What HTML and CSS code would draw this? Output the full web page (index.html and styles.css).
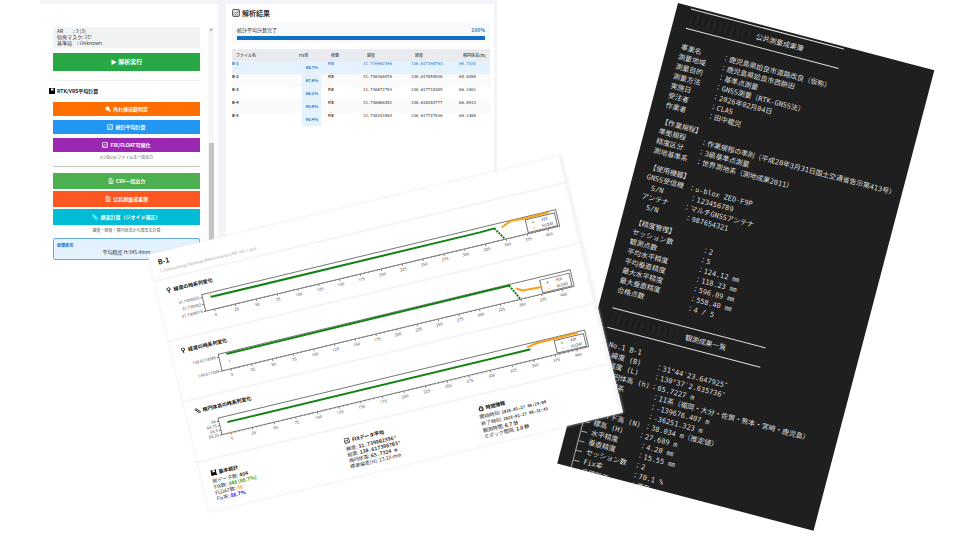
FILE: index.html
```
<!DOCTYPE html>
<html lang="ja">
<head>
<meta charset="utf-8">
<title>RTK/VRS 解析結果</title>
<link rel="stylesheet" href="styles.css">
</head>
<body>
<svg class="defs" aria-hidden="true">
  <symbol id="i-disk" viewBox="0 0 12 12"><path d="M0 0h12v12H0z" fill="currentColor"/><path d="M4 1h5v4H4z" fill="#fff"/></symbol>
  <symbol id="i-chart" viewBox="0 0 12 12"><rect x="1" y="1" width="10" height="10" rx="1" fill="none" stroke="currentColor" stroke-width="1.4"/><path d="M2.5 7l2.500-2 2 1.500 3-4M3 9.500V8M5.500 9.500V8M8 9.500V7.500" fill="none" stroke="currentColor" stroke-width="1.200"/></symbol>
  <symbol id="i-search" viewBox="0 0 12 12"><circle cx="5" cy="5" r="4" fill="currentColor"/><path d="M7 7l4 4" stroke="currentColor" stroke-width="3"/></symbol>
  <symbol id="i-file" viewBox="0 0 12 12"><path d="M2 1h6l2 2v8H2zM4 3.500h3M4 8.500h4M4 6h4" fill="none" stroke="currentColor" stroke-width="1.500"/></symbol>
  <symbol id="i-ruler" viewBox="0 0 12 12"><path d="M3 0.800L0.800 3 9 11.200 11.200 9zM3.500 5L5 3.500M6 7.500L7.500 6" fill="none" stroke="currentColor" stroke-width="1.500"/></symbol>
  <symbol id="i-pin" viewBox="0 0 12 12"><circle cx="6" cy="4" r="3" fill="none" stroke="currentColor" stroke-width="1.800"/><path d="M6 7v5" stroke="currentColor" stroke-width="1.800"/></symbol>
  <symbol id="i-clock" viewBox="0 0 12 12"><path d="M4 0h4v2H4z" fill="currentColor"/><circle cx="6" cy="7" r="3.800" fill="none" stroke="currentColor" stroke-width="2"/><path d="M6 5v2h1.500" fill="none" stroke="currentColor"/></symbol>
</svg>
<main class="board">
  <section class="app">
    <aside class="side">
      <div class="side-body">
        <pre class="info">AR　　: 3 (3)
仰角マスク: 15°
基準局　: Unknown</pre>
        <button class="btn run">▶ 解析実行</button>
        <hr class="soft">
        <h2><svg><use href="#i-disk"/></svg>RTK/VRS平均計算</h2>
        <div class="group">
          <button class="btn orange"><svg><use href="#i-search"/></svg>外れ値自動判定</button>
          <button class="btn blue"><svg><use href="#i-chart"/></svg>統計平均計算</button>
          <button class="btn purple"><svg><use href="#i-chart"/></svg>FIX/FLOAT可視化</button>
        </div>
        <p class="note">3つのCSVファイルを一括出力</p>
        <hr>
        <div class="group tight">
          <button class="btn green"><svg><use href="#i-file"/></svg>CSV一括出力</button>
          <button class="btn red"><svg><use href="#i-file"/></svg>公共測量成果簿</button>
          <button class="btn teal"><svg><use href="#i-ruler"/></svg>標高計算（ジオイド補正）</button>
        </div>
        <p class="note">緯度・経度・楕円体高から標高を計算</p>
        <div class="summary"><b>処理状況</b><span>平均精度 H:345.4mm</span></div>
      </div>
      <div class="scroll"><i>▲</i><div class="thumb"></div></div>
    </aside>
    <section class="results">
      <h1><svg><use href="#i-chart"/></svg>解析結果</h1>
      <div class="progress">
        <div><span>統計平均計算完了</span><b>100%</b></div>
        <div class="bar"></div>
      </div>
      <table class="list">
        <thead><tr><th>ファイル名</th><th>Fix率</th><th>状態</th><th>緯度</th><th>経度</th><th>楕円体高(m)</th></tr></thead>
        <tbody>
          <tr class="on"><td>B-1</td><td><span>88.7%</span></td><td>Fix</td><td>31.739902396</td><td>130.617398703</td><td>65.7324</td></tr>
          <tr><td>B-2</td><td><span>67.6%</span></td><td>Fix</td><td>31.740166970</td><td>130.617059540</td><td>65.8450</td></tr>
          <tr><td>B-3</td><td><span>66.1%</span></td><td>Fix</td><td>31.740672793</td><td>130.617718385</td><td>66.3461</td></tr>
          <tr><td>B-4</td><td><span>90.9%</span></td><td>Fix</td><td>31.740066452</td><td>130.618282777</td><td>66.0913</td></tr>
          <tr><td>B-5</td><td><span>90.4%</span></td><td>Fix</td><td>31.740242084</td><td>130.617747036</td><td>66.1408</td></tr>
        </tbody>
      </table>
    </section>
  </section>

  <section class="term">
    <header class="band"><i></i><h2>公共測量成果簿</h2></header>
    <dl>
      <dt>事業名</dt><dd>：鹿児島県姶良市道路改良（仮称）</dd>
      <dt>測量地域</dt><dd>：鹿児島県姶良市西餅田</dd>
      <dt>測量目的</dt><dd>：基準点測量</dd>
      <dt>測量方法</dt><dd>：GNSS測量（RTK-GNSS法）</dd>
      <dt>実施日</dt><dd>：2026年02月04日</dd>
      <dt>受注者</dt><dd>：CLAS</dd>
      <dt>作業者</dt><dd>：田中龍児</dd>
    </dl>
    <h3>【作業規程】</h3>
    <dl>
      <dt>準拠規程</dt><dd>：作業規程の準則（平成20年3月31日国土交通省告示第413号）</dd>
      <dt>精度区分</dt><dd>：3級基準点測量</dd>
      <dt>測地基準系</dt><dd>：世界測地系（測地成果2011）</dd>
    </dl>
    <h3>【使用機器】</h3>
    <dl>
      <dt>GNSS受信機</dt><dd>：u-blox ZED-F9P</dd>
      <dt class="sub">S/N</dt><dd class="in">：123456789</dd>
      <dt>アンテナ</dt><dd>：マルチGNSSアンテナ</dd>
      <dt class="sub">S/N</dt><dd class="in">：987654321</dd>
    </dl>
    <h3>【精度管理】</h3>
    <dl class="wide">
      <dt>セッション数</dt><dd>：2</dd>
      <dt>観測点数</dt><dd>：5</dd>
      <dt>平均水平精度</dt><dd>：124.12 ㎜</dd>
      <dt>平均垂直精度</dt><dd>：118.23 ㎜</dd>
      <dt>最大水平精度</dt><dd>：596.09 ㎜</dd>
      <dt>最大垂直精度</dt><dd>：558.40 ㎜</dd>
      <dt>合格点数</dt><dd>：4 / 5</dd>
    </dl>
    <header class="band second"><i></i><h2>観測成果一覧</h2></header>
    <h4>No.1 B-1</h4>
    <dl class="tree">
      <dt>緯度 (B)</dt><dd>：31°44′23.647925″</dd>
      <dt>経度 (L)</dt><dd>：130°37′2.635736″</dd>
      <dt>楕円体高 (h)</dt><dd>：65.7227 m</dd>
      <dt>座標系</dt><dd class="in">：II系（福岡・大分・佐賀・熊本・宮崎・鹿児島）</dd>
      <dt>X座標</dt><dd class="in">：-139676.407 m</dd>
      <dt>Y座標</dt><dd class="in">：-36251.323 m</dd>
      <dt>ジオイド高 (N)</dt><dd class="in">：38.034 m（推定値）</dd>
      <dt>標高 (H)</dt><dd>：27.689 m</dd>
      <dt>水平精度</dt><dd class="in">：4.20 ㎜</dd>
      <dt>垂直精度</dt><dd class="in">：15.55 ㎜</dd>
      <dt>セッション数</dt><dd class="in">：2</dd>
      <dt>Fix率</dt><dd class="in">：70.1 %</dd>
      <dt>品質評価</dt><dd class="in">：優良</dd>
    </dl>
  </section>

  <section class="report">
    <header><h2>B-1</h2><p>C:/Users/kangi/Desktop/RINEX/Kousen/RB-168-1.pos</p></header>
    <section class="plot"><h3><svg><use href="#i-pin"/></svg>緯度の時系列変化</h3><svg class="chart" viewBox="0 0 422 27" data-left="43" data-zero="52" data-y="31.7399025,31.739902,31.7399015"></svg></section>
    <section class="plot"><h3><svg><use href="#i-pin"/></svg>経度の時系列変化</h3><svg class="chart" viewBox="0 0 422 27" data-left="45" data-zero="54" data-y="130.6173985,130.617398"></svg></section>
    <section class="plot"><h3><svg><use href="#i-ruler"/></svg>楕円体高の時系列変化</h3><svg class="chart" viewBox="0 0 422 27" data-left="30" data-zero="39" data-y="66,65.75,65.5,65.25"></svg></section>
    <div class="stats">
      <div><h3><svg><use href="#i-disk"/></svg>基本統計</h3><p>総データ数: <b>404</b></p><p>FIX数: <b class="fix">348 (88.7%)</b></p><p>FLOAT数: <b class="float">56</b></p><p>Fix率: <b class="rate">88.7%</b></p></div>
      <div><h3><svg><use href="#i-chart"/></svg>FIXデータ平均</h3><p>緯度: <code>31.739902396°</code></p><p>経度: <code>130.617398703°</code></p><p>楕円体高: <code>65.7324 m</code></p><p>標準偏差(H): 13.18 mm</p></div>
      <div><h3><svg><use href="#i-clock"/></svg>時間情報</h3><p>開始時刻: <code class="small">2026-01-27 06:25:00</code></p><p>終了時刻: <code class="small">2026-01-27 06:31:43</code></p><p>観測時間: <b>6.7 分</b></p><p>エポック間隔: <b>1.0 秒</b></p></div>
    </div>
  </section>
</main>
<script src="charts.js"></script>
</body>
</html>
```
FILE: styles.css
```
* { box-sizing: border-box; }
body { margin: 0; background: #fff; color: #333; font-family: "Noto Sans CJK JP", sans-serif; overflow: hidden; }
h1, h2, h3, h4, p, dl, dd, pre { margin: 0; }
.defs { position: absolute; width: 0; height: 0; }
.board { position: relative; min-height: 100vh; overflow: hidden; }

.app { position: absolute; left: 40px; top: 0; width: 457px; padding-top: 4px; background: #f3f4f7; display: grid; grid-template-columns: 178px 1fr; gap: 8px; padding-right: 3px; font-size: 5px; line-height: 6px; }
.side { background: #fff; display: flex; padding: 23px 4px 0 13px; gap: 8px; }
.side-body { flex: 1; display: flex; flex-direction: column; padding-bottom: 1px; }
.info { background: #f1f2f4; padding: 1px 4px 2px; font: inherit; }
.btn { display: flex; align-items: center; justify-content: center; gap: 2px; border: 0; padding: 0; height: 14px; color: #fff; font: bold 5px/6px "Noto Sans CJK JP", sans-serif; width: 100%; }
.btn svg { width: 6px; height: 6px; }
.run { height: 18px; margin-top: 5px; background: #28a745; font-size: 6px; }
hr { border: 0; height: 1px; width: 100%; background: #c4c4c4; margin: 6px 0 6px; }
.soft { background: #f0f0f0; margin: 9px 0 7px; }
.side h2 { display: flex; gap: 2px; align-items: center; font-size: 5px; line-height: 6px; margin: 0 0 8px -4px; color: #222; }
.side h2 svg { width: 6px; height: 6px; color: #000; }
.group { display: grid; gap: 4px; }
.tight { gap: 2px; }
.tight .btn { height: 16px; }
.orange { background: #ff6f00; }
.blue { background: #2196f3; }
.purple { background: #9c27b0; }
.green { background: #4caf50; }
.red { background: #ff5722; }
.teal { background: #00bcd4; }
.note { text-align: center; font-size: 4px; line-height: 6px; margin-top: 2px; color: #555; }
.summary { margin-top: 5px; height: 22px; border: 1px solid #64a9e4; border-radius: 2px; background: #e3f2fd; padding: 3px; display: grid; text-align: center; }
.summary b { color: #1565c0; text-align: left; font-size: 4px; }
.scroll { width: 6px; background: #f5f5f5; display: flex; flex-direction: column; align-items: center; }
.scroll i { font-size: 3px; font-style: normal; color: #999; }
.thumb { width: 5px; height: 98px; margin-top: 110px; background: #c4c4c6; }

.results { background: #fff; padding: 4px 4px 0 6px; margin-top: 0; }
.results h1 { display: flex; align-items: center; gap: 2px; font-size: 7px; line-height: 10px; }
.results h1 svg { width: 8px; height: 8px; }
.progress { margin-top: 5px; background: #f8f9fa; padding: 4px 5px; height: 20px; }
.progress > div:first-child { display: flex; justify-content: space-between; margin-bottom: 3px; }
.progress b { color: #2a7fc4; }
.bar { height: 4px; background: #1170c0; }
.list { margin-top: 6px; border-collapse: collapse; width: 100%; table-layout: fixed; font-size: 5px; line-height: 6px; }
.list th { background: #e9ebef; height: 12px; font-weight: 500; text-align: left; padding: 0; font-size: 4px; color: #444; white-space: nowrap; }
.list th:nth-child(1) { width: 67px; padding-left: 4px; }
.list th:nth-child(2) { width: 28px; }
.list th:nth-child(3) { width: 36px; padding-left: 4px; }
.list th:nth-child(4) { width: 48px; padding-left: 4px; }
.list th:nth-child(5) { width: 48px; padding-left: 4px; }
.list th:nth-child(6) { padding-left: 4px; }
.list td { height: 13px; padding: 0; vertical-align: top; color: #333; line-height: 5px; }
.list td:nth-child(n+4) { font: 4px/5px "DejaVu Sans Mono", monospace; }
.list td:nth-child(2) { padding-left: 3px; }
.list td span { display: block; width: 19px; height: 13px; padding: 4px 3px 0 0; text-align: right; font-size: 4px; font-weight: 700; background: #e3f2fd; color: #1976d2; }
.list td:nth-child(3) { padding-left: 1px; font-size: 4px; font-weight: 700; }
.list td:first-child { font-size: 4px; font-weight: 700; }
.list tr:nth-child(even) td { background: #fafafa; }
.list .on td { background: #e3f2fd; color: #1976d2; }

.term { position: absolute; left: 678px; top: 3px; width: 265px; height: 476px; transform: rotate(14.7deg); transform-origin: 0 0; background: #1f1f1f; color: #ddd; padding: 2px 0 0 14px; font-family: "DejaVu Sans Mono", "Noto Sans CJK JP", monospace; font-size: 7px; line-height: 10px; overflow: hidden; white-space: nowrap; }
.term h2, .term h3, .term h4 { font-size: 7px; line-height: 10px; font-weight: 400; }
.band { width: 158px; height: 21px; border-top: 1px solid #ddd; border-bottom: 1px solid #ddd; display: flex; align-items: center; gap: 4px; margin-bottom: 14px; }
.band i { width: 66px; height: 9px; background: repeating-linear-gradient(90deg, #1a1a1a 0 1px, #222 1px 5px, #1a1a1a 5px 6px); }
.term dl { display: grid; grid-template-columns: 43px 1fr; grid-auto-rows: 10px; }
.term h3 { margin-top: 7px; }
.term .sub { padding-left: 7px; }
.term .in { padding-left: 4px; }
.term .wide { grid-template-columns: 72px 1fr; }
.term .second { margin: 13px 0 11px; gap: 12px; }
.term h4 { padding-left: 6px; }
.term .tree { grid-template-columns: 56px 1fr; border-left: 1px solid #aaa; }
.tree dt { display: flex; align-items: center; gap: 4px; }
.tree dt::before { content: ""; width: 6px; height: 1px; background: #aaa; }

.report { position: absolute; left: 148px; top: 255px; width: 425px; height: 264px; transform: rotate(-13.5deg); transform-origin: 0 0; background: #fff; box-shadow: 0 0 3px #e6e7ea; border-right: 3px solid #f4f5f8; font-size: 5px; line-height: 6px; color: #222; }
.report header { height: 26px; padding: 5px 8px 0; }
.report header h2 { font-size: 7px; line-height: 9px; }
.report header p { font-size: 4px; line-height: 8px; color: #aaa; }
.report h3 { display: flex; align-items: center; gap: 2px; font-size: 5px; line-height: 7px; color: #111; }
.report h3 svg { width: 6px; height: 6px; }
.plot { height: 62px; border-top: 2px solid #f5f5f7; padding-top: 7px; }
.plot h3 { padding-left: 9px; }
.chart { display: block; width: 100%; margin-top: 9px; overflow: visible; font: 4px "Noto Sans", sans-serif; }
.axis { fill: none; stroke: #777; stroke-width: 1; }
.line { fill: none; stroke: #128212; stroke-width: 2; stroke-linecap: round; }
.dots { fill: none; stroke: #128212; stroke-width: 2; stroke-dasharray: 2 1; }
.amber { fill: none; stroke: #f9a01b; stroke-width: 2; stroke-linecap: round; stroke-linejoin: round; }
.key { fill: #fff; stroke: #777; }
.stats { display: grid; grid-template-columns: repeat(3, 1fr); border-top: 2px solid #f5f5f7; padding: 9px 0 0 10px; }
.stats h3 { margin-bottom: 2px; }
.stats p { color: #333; }
.stats code { font: bold 5px/6px "DejaVu Sans Mono", monospace; }
.stats code.small { font-size: 4px; }
.stats .fix { color: #2ca02c; }
.stats .float { color: #ff9f40; }
.stats .rate { color: #22e; }
```
FILE: charts.js
```
const series = [
  { green: 'M52 4.500H328L343 4', dots: 'M343 4L351 17', amber: 'M351 4.500L361 0.500L375 1.500L399 1', first: [51.5, 2.5] },
  { green: 'M54 1.500L344 1', dots: 'M344 1L352 17', amber: 'M351 6L356 9L375 10', first: [54.5, 9] },
  { green: 'M39 6L349 6', dots: '', amber: 'M348 3L358 1.500L399 1', first: [39, 17] }
];
document.querySelectorAll('.chart').forEach((svg, i) => {
  const left = +svg.dataset.left, zero = +svg.dataset.zero, s = series[i];
  const step = (395 - zero) / 16;
  let out = `<rect class="axis" x="${left}" y="0" width="${407 - left}" height="17"/>`;
  for (let n = 0; n <= 16; n++) {
    const x = zero + n * step;
    out += `<path class="axis" d="M${x} 17v2"/><text x="${x}" y="24" text-anchor="middle" fill="#444">${n * 25}</text>`;
    for (let m = 1; m < 5 && n < 16; m++) out += `<path class="axis" d="M${x + m * step / 5} 17v1"/>`;
  }
  const labels = svg.dataset.y.split(',');
  labels.forEach((t, k) => {
    const y = 3 + k * (14 / (labels.length - 1));
    out += `<path class="axis" d="M${left - 2} ${y}h2"/><text x="${left - 3}" y="${y + 1}" text-anchor="end" fill="#444">${t}</text>`;
  });
  out += `<rect class="key" x="375" y="3" width="30" height="13"/>
    <circle cx="382" cy="7" r="0.700" fill="#128212"/><circle cx="382" cy="13" r="0.700" fill="#f9a01b"/>
    <text x="394" y="8" text-anchor="middle" fill="#333">FIX</text><text x="396" y="14" text-anchor="middle" fill="#333">FLOAT</text>
    <path class="line" d="${s.green}"/><path class="dots" d="${s.dots}"/><path class="amber" d="${s.amber}"/>
    <circle cx="${s.first[0]}" cy="${s.first[1]}" r="0.800" fill="#f9a01b"/>`;
  svg.innerHTML = out;
});
```
